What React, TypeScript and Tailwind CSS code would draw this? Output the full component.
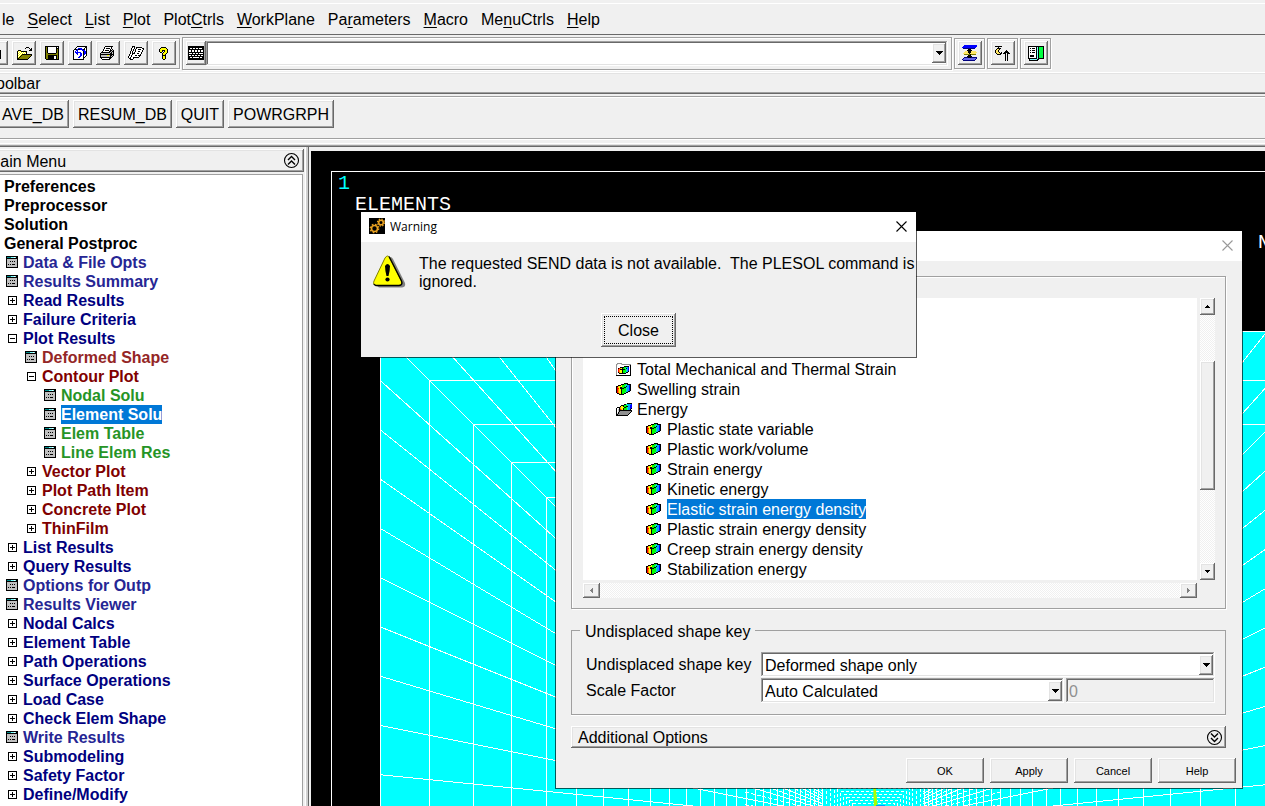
import React from "react";

const RAISED =
  "bg-[#f0f0f0] shadow-[inset_-1px_-1px_0_#696969,inset_1px_1px_0_#fff,inset_-2px_-2px_0_#a0a0a0,inset_2px_2px_0_#e3e3e3]";
const SUNKEN =
  "shadow-[inset_-1px_-1px_0_#fff,inset_1px_1px_0_#a0a0a0,inset_-2px_-2px_0_#e3e3e3,inset_2px_2px_0_#696969]";
const GROOVE = "border border-[#a0a0a0] shadow-[1px_1px_0_#fff,inset_1px_1px_0_#fff]";
const TRACK =
  "bg-[repeating-conic-gradient(#fff_0_25%,#f0f0f0_0_50%)] bg-[length:2px_2px]";

const PALETTE: Record<string, string> = {
  k: "#000000",
  w: "#ffffff",
  y: "#ffff00",
  o: "#808000",
  b: "#0000ff",
  n: "#000080",
  p: "#6464e6",
  g: "#808080",
  l: "#c0c0c0",
  c: "#80ffff",
  t: "#008c8c",
  G: "#00ff40",
  s: "#ffe664",
  r: "#ff0000",
  O: "#ff8c00",
  e: "#00ff00",
  q: "#00e6c8",
  a: "#00a0ff",
  m: "#909090",
};

function Pixels({ rows, className = "" }: { rows: string[]; className?: string }) {
  const width = Math.max(...rows.map((r) => r.length));
  return (
    <svg
      width={width}
      height={rows.length}
      viewBox={`0 0 ${width} ${rows.length}`}
      shapeRendering="crispEdges"
      className={`shrink-0 ${className}`}
      aria-hidden="true"
    >
      {rows.flatMap((row, y) =>
        row
          .split("")
          .map((ch, x) =>
            PALETTE[ch] ? <rect key={`${x}-${y}`} x={x} y={y} width="1" height="1" fill={PALETTE[ch]} /> : null
          )
      )}
    </svg>
  );
}

const NEW_FILE = [
  "kkkkkkkkk...",
  "kwwwwwwkkk..",
  "kwwwwwwkwkk.",
  "kwwwwwwkkkk.",
  "kwwwwwwwwwk.",
  "kwwwwwwwwwk.",
  "kwwwwwwwwwk.",
  "kwwwwwwwwwk.",
  "kwwwwwwwwwk.",
  "kwwwwwwwwwk.",
  "kkkkkkkkkkk.",
];
const OPEN = [
  "..........kkk...",
  ".........k...k.k",
  "..............kk",
  "..kkk........kkk",
  ".kywykkkkkk.....",
  ".kwywywywyk.....",
  ".kywywywywk.....",
  ".kwywykkkkkkkkkk",
  ".kywykoooooooook",
  ".kwykoooooooook.",
  ".kykoooooooook..",
  ".kkoooooooook...",
  ".kkkkkkkkkkk....",
];
const SAVE = [
  "kkkkkkkkkkkkkk",
  "kokwwwwwwwwkwk",
  "kokwwwwwwwwkkk",
  "kokwwwwwwwwkok",
  "kokwwwwwwwwkok",
  "kokwwwwwwwwkok",
  "kokwwwwwwwwkok",
  "kookkkkkkkkook",
  "kooooooooooook",
  "kookkkkkkkkkok",
  "kookkkkkkwwkok",
  "kookkkkkkwwkok",
  "kookkkkkkwwkok",
  ".kkkkkkkkkkkkk",
];
const REPLOT = [
  "....kkkkkkkkkk",
  "...kwwwwwwwwkk",
  "..kwwbbbbwwkwk",
  ".kkkbkkbbbkkwk",
  "kwwbbwwwwbbbwk",
  "kwbwbwwwwwkbbk",
  "kwbbbbbbwwkbbk",
  "kwwbbwwbbwkbbk",
  "kwwwbwwbbwkbwk",
  "kwwwwwwbbwkwwk",
  "kwwwwwbbwwkwk.",
  "kwwwwbbwwwkk..",
  "kwwwwwwwwwk...",
  "kkkkkkkkkkk...",
];
const PRINT = [
  ".....kkkkkkkk...",
  "....kwwwwwwk....",
  "....kwkkkkwk....",
  "...kwwwwwwk.k...",
  "...kwkkkkwkklk..",
  "..kwwwwwwkklkk..",
  ".kkkkkkkkklklk..",
  "klllllllllkklk..",
  "kkkkkkkkkkkkkk..",
  "kllllllyylkklk..",
  "klllllllllklk...",
  "kkkkkkkkkkkk....",
  ".kwwwwwwwkk.....",
  "..kkkkkkkk......",
];
const REPORT = [
  "....kkk.........",
  "....kwk.kkkkkk..",
  "...kwwk.kwwwwwkk",
  "...kwk.kwwkkkwwk",
  "...kwk.kwwwwwwk.",
  "..kwk..kwwkkwwk.",
  "..kwk.kwwwwwwk..",
  "..kwkkkwwkkwwk..",
  ".kwwkwwwwwwwk...",
  ".kwkwwwkkwkkk...",
  "kwwkwwwwwwwk....",
  "kwkwwkkkkkk.....",
  ".kkwwk..........",
  "..kkk...........",
];
const HELP = [
  "..kkkkk...",
  ".kyyyyyk..",
  "kyyyyyyyk.",
  "kyykkkyyk.",
  "kyyk.kyyk.",
  ".kk.kyyyk.",
  "...kyyyk..",
  "...kyyk...",
  "...kkkk...",
  "...kyyk...",
  "...kyyk...",
  "...kyyk...",
  "....kk....",
];
const KEYBOARD = [
  "kkkkkkkkkkkkkkkk",
  "kkkkkkkkkkkkkkkk",
  "kkwwkwwkwwkwwwkk",
  "kkkkkkkkkkkkkkkk",
  "kwwkwwkwwkwwkwwk",
  "kwwkwwkwwkwwkwwk",
  "kkkkkkkkkkkkkkkk",
  "kwwwkwwkwwkwwwwk",
  "kkkkkkkkkkkkkkkk",
  "kwwkwwkwwkwwkwwk",
  "kkkkkkkkkkkkkkkk",
  "kkwwkwwwwwwkwwkk",
  "kkkkkkkkkkkkkkkk",
  "kkkkkkkkkkkkkkkk",
];
const LAYERS = [
  "..bbbbbbbbbbbbb.",
  ".bbbbbbbbbbbbbb.",
  "bbbbbbbbbbbbbb..",
  ".nnnnnnnnnnnn...",
  "......kkk.......",
  ".....kkkkk......",
  "...ssskkksssss..",
  "..sssskkkssssss.",
  ".sssssskssssss..",
  "..ooooookooooo..",
  "......kkk.......",
  ".....kkkkk......",
  "..nnnnkkknnnnnn.",
  ".nppppppppppppn.",
  "nppppppppppppn..",
  ".nnnnnnnnnnnn...",
];
const CONTACT = [
  "kkkkkkk.........",
  "...k............",
  "..kkkk..........",
  ".kssk...........",
  "kssk.......k....",
  "kssk......kkk...",
  "ksssk.k..kkkkk..",
  ".kssskk.kkk.kkk.",
  "..kkkk....k.k...",
  "..........k.k...",
  "..........k.k...",
  "..........k.k...",
  "..........k.k...",
  "..........k.k...",
  "..........k.k...",
];
const PANELS = [
  "kkkkkkkkkkkkkkkk",
  "kwwwwwwwkckGGGGk",
  "kwkwkkkwkckGGGGk",
  "kwwwwwwwkckGGGGk",
  "kwkwkkkwkckGGGGk",
  "kwwwwwwwkckGGGGk",
  "kwkwkkkwkckGGGGk",
  "kwwwwwwwkckGGGGk",
  "kwwwwwwwkckGGGGk",
  "kwkkkkwwkckGGGGk",
  "kwkkkkwwkckGGGGk",
  "kwwwwwwwkckGGGGk",
  "kkkkkkkkkckkkkkk",
  ".kccccccckk.....",
  ".kkkkkkkkk......",
];
const DIALOG_ITEM = [
  "kkkkkkkkkkkk",
  "kttttcccwckk",
  "kkkkkkkkkkkk",
  "kllllllllllk",
  "kllllllllllk",
  "klllklklkllk",
  "kllllllllllk",
  "kllllllllllk",
  "klklklkkkllk",
  "kllllllllllk",
  "kllllllllllk",
  "kkkkkkkkkkkk",
];
const PLUS = [
  "kkkkkkkkk",
  "kwwwwwwwk",
  "kwwwkwwwk",
  "kwwwkwwwk",
  "kwkkkkkwk",
  "kwwwkwwwk",
  "kwwwkwwwk",
  "kwwwwwwwk",
  "kkkkkkkkk",
];
const MINUS = [
  "kkkkkkkkk",
  "kwwwwwwwk",
  "kwwwwwwwk",
  "kwwwwwwwk",
  "kwkkkkkwk",
  "kwwwwwwwk",
  "kwwwwwwwk",
  "kwwwwwwwk",
  "kkkkkkkkk",
];
const CUBE = [
  "........kkkk....",
  ".....kkkeeqkkkk.",
  "..kkkyeeeqqaabk.",
  "kkOyyyeeeqkaabk.",
  "kryykkeekkqaabk.",
  "krrykkkkeeqaabk.",
  "krOyykeeeeqaabk.",
  "krOyykeeeeqaabk.",
  "krOyykeeeeqakk..",
  "krOyykeeeqkk....",
  ".kkOykeekk......",
  "...kkkkk........",
];
const FOLDER = [
  ".mmmmm..........",
  "mlwwwlmmmmmmmmm.",
  "mwwwwwwwwwwwwlk.",
  "mwwwwwwwkkkkkwk.",
  "mwwwkkkkeeqabwk.",
  "mwkrOykeeqkabwk.",
  "mwrOkkkkkeqabwk.",
  "mwrOyykeeeqabwk.",
  "mwrOyykeeeqakwk.",
  "mwkOyykeeqkkwwk.",
  "mwwkkkkkkkwwwwk.",
  "mwwwwwwwwwwwwwk.",
  "kkkkkkkkkkkkkkk.",
];
const FOLDER_OPEN = [
  "...........kkkkk",
  "........kkqqaaab",
  ".....kkkeeeqaabb",
  "....kyykeekkaabb",
  ".kkkOyyykkeqaabb",
  "kwwkOyykeeeqaabk",
  "kwlkrOykeeeqaak.",
  "kwlkkkkkkkkkkkkk",
  "kwlkmmmmmmmmmmmk",
  "kwkmmmmmmmmmmmk.",
  "klkmmmmmmmmmmk..",
  "kkmmmmmmmmmmk...",
  "kkkkkkkkkkkk....",
];
const RESULT_ICONS = { folder: FOLDER, open: FOLDER_OPEN, cube: CUBE };
const DROP = ["kkkkkkk", ".kkkkk.", "..kkk..", "...k..."];
const SMALL_UP = ["..k..", ".kkk.", "kkkkk"];
const SMALL_DOWN = ["kkkkk", ".kkk.", "..k.."];
const SMALL_LEFT = ["..g", ".gg", "ggg", ".gg", "..g"];
const SMALL_RIGHT = ["g..", "gg.", "ggg", "gg.", "g.."];

function Chevrons({ down = false }: { down?: boolean }) {
  return (
    <svg width="17" height="17" viewBox="0 0 17 17" className="shrink-0" fill="none" stroke="#000" aria-hidden="true">
      <circle cx="8.5" cy="8.5" r="7" strokeWidth="1.1" />
      <path
        d={down ? "M5 4.5 L8.5 8 L12 4.5 M5 9 L8.5 12.5 L12 9" : "M5 8 L8.5 4.5 L12 8 M5 12.5 L8.5 9 L12 12.5"}
        strokeWidth="1.4"
      />
    </svg>
  );
}

function Gear({ cx, cy, r }: { cx: number; cy: number; r: number }) {
  return (
    <g stroke="#e8a020" fill="none">
      <circle cx={cx} cy={cy} r={r} strokeWidth="1.6" />
      <circle cx={cx} cy={cy} r={r + 1.2} strokeWidth="1.3" strokeDasharray={`${(r + 1.2) * 0.393} ${(r + 1.2) * 0.393}`} />
    </g>
  );
}

function WarningIcon() {
  return (
    <svg width="33" height="33" viewBox="0 0 33 33" className="shrink-0" aria-hidden="true">
      <path d="M17 2 Q19 2 20 4 L32 28 Q33 32 29 32.500 H6 L4 31 Z" fill="#808080" />
      <path d="M12 3 Q14.500 -1 17 3 L28.500 26 Q30 30 26 30.500 H3 Q-0.500 30 1 26 Z" fill="#ffff00" stroke="#808000" />
      <path d="M16 1.500 L28.500 26 Q30 30 26 30.500 H3 Q1.500 30 1 29" fill="none" stroke="#000" strokeWidth="1.400" />
      <path d="M12 11 Q14.500 7 17 11 Q17 15 15.500 21 H13.500 Q12 15 12 11 Z" />
      <circle cx="14.500" cy="24.500" r="2.100" />
    </svg>
  );
}

const CX = 873;
const CY = 824;
const HALF = 493;
const RINGS = [
  493, 444, 400, 362, 327, 297, 270, 245, 223, 204, 187, 173, 159, 147, 137, 127, 118, 110, 103, 96, 90, 84, 78, 73, 68,
  63, 59, 55, 51, 47, 43, 39, 36, 33, 30, 27, 24, 21, 18, 15, 12,
];

/* One mesh ray from an outer square toward the centre, ending on the inner square. */
function ray(dx: number, dy: number, outer: number, inner: number) {
  const k = inner / outer;
  return `M${CX + dx} ${CY + dy} L${CX + dx * k} ${CY + dy * k}`;
}

function rays(d: number, outer: number, inner: number) {
  return [ray(d, -outer, outer, inner), ray(-outer, d, outer, inner), ray(outer, d, outer, inner)].join(" ");
}

function Mesh() {
  const coarse = Array.from({ length: 21 }, (_, i) => -HALF + (i * HALF) / 10);
  const fine = Array.from({ length: 20 }, (_, i) => -128 + (i + 0.5) * 12.8);
  return (
    <svg className="absolute inset-0 h-full w-full" aria-label="Element plot">
      <g transform="translate(-311 -151)">
        <path d="M331.5 2000 V171.500 H4000" fill="none" stroke="#fff" shapeRendering="crispEdges" />
        <rect x="380" y="331" width="986" height="986" fill="#00ffff" />
        <g fill="none" stroke="#fff" shapeRendering="crispEdges">
          {RINGS.map((r) => (
            <rect
              key={r}
              x={CX - r + 0.5}
              y={CY - r + 0.5}
              width={2 * r}
              height={2 * r}
              strokeDasharray={r < 50 ? "3 2" : undefined}
            />
          ))}
          {coarse.map((d) => (
            <path key={d} d={rays(d, HALF, 50)} />
          ))}
          {fine.map((d) => (
            <path key={d} d={rays(d, 128, 50)} strokeDasharray="4 2" />
          ))}
        </g>
        <path d="M873 780 H875 L878 810 H874 Z" fill="#aaff00" />
        <rect x="876" y="805" width="9" height="2" fill="#00a0ff" />
        <g fontFamily="'Liberation Mono', monospace" fontSize="20">
          <text x="338" y="189" fill="#00ffff">1</text>
          <text x="355" y="210" fill="#fff">ELEMENTS</text>
          <text x="1258" y="248" fill="#fff">N</text>
        </g>
      </g>
    </svg>
  );
}

const MENUS: [string, string, string][] = [
  ["le", "", ""],
  ["", "S", "elect"],
  ["", "L", "ist"],
  ["", "P", "lot"],
  ["Plot", "C", "trls"],
  ["", "W", "orkPlane"],
  ["Pa", "r", "ameters"],
  ["", "M", "acro"],
  ["Me", "n", "uCtrls"],
  ["", "H", "elp"],
];

const TOOLS: [string, string[]][] = [
  ["New", NEW_FILE],
  ["Open", OPEN],
  ["Save", SAVE],
  ["Replot", REPLOT],
  ["Print", PRINT],
  ["Report", REPORT],
  ["Help", HELP],
];

const SIDE_TOOLS: [string, string[]][] = [
  ["Raise hidden", LAYERS],
  ["Reset picking", CONTACT],
  ["Contact manager", PANELS],
];

type Node = { level: number; kind: "root" | "plus" | "minus" | "leaf"; label: string; selected?: boolean };
const n = (level: number, kind: Node["kind"], label: string, selected = false): Node => ({ level, kind, label, selected });
const TREE: Node[] = [
  n(0, "root", "Preferences"),
  n(0, "root", "Preprocessor"),
  n(0, "root", "Solution"),
  n(0, "root", "General Postproc"),
  n(1, "leaf", "Data & File Opts"),
  n(1, "leaf", "Results Summary"),
  n(1, "plus", "Read Results"),
  n(1, "plus", "Failure Criteria"),
  n(1, "minus", "Plot Results"),
  n(2, "leaf", "Deformed Shape"),
  n(2, "minus", "Contour Plot"),
  n(3, "leaf", "Nodal Solu"),
  n(3, "leaf", "Element Solu", true),
  n(3, "leaf", "Elem Table"),
  n(3, "leaf", "Line Elem Res"),
  n(2, "plus", "Vector Plot"),
  n(2, "plus", "Plot Path Item"),
  n(2, "plus", "Concrete Plot"),
  n(2, "plus", "ThinFilm"),
  n(1, "plus", "List Results"),
  n(1, "plus", "Query Results"),
  n(1, "leaf", "Options for Outp"),
  n(1, "leaf", "Results Viewer"),
  n(1, "plus", "Nodal Calcs"),
  n(1, "plus", "Element Table"),
  n(1, "plus", "Path Operations"),
  n(1, "plus", "Surface Operations"),
  n(1, "plus", "Load Case"),
  n(1, "plus", "Check Elem Shape"),
  n(1, "leaf", "Write Results"),
  n(1, "plus", "Submodeling"),
  n(1, "plus", "Safety Factor"),
  n(1, "plus", "Define/Modify"),
];

const INDENT = ["pl-[4px]", "pl-[6px]", "pl-[25px]", "pl-[44px]"];
const BRANCH_COLOR = ["text-black", "text-[#000080]", "text-[#800000]", "text-[#008000]"];
const LEAF_COLOR = ["text-black", "text-[#262694]", "text-[#942626]", "text-[#269426]"];

function TreeRow({ node }: { node: Node }) {
  const color = node.selected
    ? "bg-[#0078d7] text-white"
    : node.kind === "leaf"
      ? LEAF_COLOR[node.level]
      : BRANCH_COLOR[node.level];
  return (
    <li className={`flex h-[19px] shrink-0 items-center ${INDENT[node.level]}`}>
      {node.kind !== "root" && (
        <span className="flex w-[17px] shrink-0">
          {node.kind === "leaf" && <Pixels rows={DIALOG_ITEM} className="mb-px" />}
          {node.kind === "plus" && <Pixels rows={PLUS} className="ml-[2px]" />}
          {node.kind === "minus" && <Pixels rows={MINUS} className="ml-[2px]" />}
        </span>
      )}
      <a href="#" className={`leading-[19px] font-bold whitespace-nowrap ${color}`}>
        {node.label}
      </a>
    </li>
  );
}

const RESULTS: { icon: "folder" | "cube" | "open"; child?: boolean; label: string; selected?: boolean }[] = [
  { icon: "folder", label: "Total Mechanical and Thermal Strain" },
  { icon: "cube", label: "Swelling strain" },
  { icon: "open", label: "Energy" },
  { icon: "cube", child: true, label: "Plastic state variable" },
  { icon: "cube", child: true, label: "Plastic work/volume" },
  { icon: "cube", child: true, label: "Strain energy" },
  { icon: "cube", child: true, label: "Kinetic energy" },
  { icon: "cube", child: true, label: "Elastic strain energy density", selected: true },
  { icon: "cube", child: true, label: "Plastic strain energy density" },
  { icon: "cube", child: true, label: "Creep strain energy density" },
  { icon: "cube", child: true, label: "Stabilization energy" },
];

function CloseCross() {
  return (
    <svg width="11" height="11" viewBox="0 0 11 11" className="block" aria-hidden="true">
      <path d="M0.500 0.500 L10.500 10.500 M10.500 0.500 L0.500 10.500" stroke="currentColor" fill="none" strokeWidth="1.1" />
    </svg>
  );
}

function Dropdown({ id, value, className }: { id: string; value: string; className: string }) {
  return (
    <div className={`relative flex h-[25px] bg-white ${SUNKEN} ${className}`}>
      <select
        id={id}
        className="w-full appearance-none bg-transparent pt-[2px] pr-5 pl-[4px] outline-none"
        defaultValue={value}
      >
        <option>{value}</option>
      </select>
      <span
        className={`pointer-events-none absolute top-[3px] right-[2px] flex h-[20px] w-[14px] items-center justify-center ${RAISED}`}
      >
        <Pixels rows={DROP} />
      </span>
    </div>
  );
}

function ContourDialog() {
  return (
    <section
      aria-label="Contour Element Solution Data"
      className="absolute top-[230px] left-[555px] w-[688px] border border-black/65 bg-[#f0f0f0] bg-clip-padding"
    >
      <header className="flex h-[30px] items-center justify-end bg-white pr-[9px] pb-[2px]">
        <button aria-label="Close dialog" className="text-[#999]">
          <CloseCross />
        </button>
      </header>
      <div className="pt-[15px] pr-[16px] pl-[15px]">
        <div className={`flex gap-[3px] pt-[21px] pr-[10px] pb-[10px] pl-[11px] ${GROOVE}`}>
          <div className="flex flex-1 flex-col gap-[3px]">
            <ul className="h-[282px] bg-white pt-[61px]">
              {RESULTS.map((r) => (
                <li key={r.label} className={`flex h-[20px] items-center gap-[5px] ${r.child ? "pl-[63px]" : "pl-[33px]"}`}>
                  <Pixels rows={RESULT_ICONS[r.icon]} />
                  <a
                    href="#"
                    className={`h-[20px] pt-[2px] leading-[18px] ${r.selected ? "bg-[#0078d7] text-white" : "text-black"}`}
                  >
                    {r.label}
                  </a>
                </li>
              ))}
            </ul>
            <div className={`flex h-[15px] justify-between ${TRACK}`}>
              <button aria-label="Scroll left" className={`flex w-[17px] items-center justify-center ${RAISED}`}>
                <Pixels rows={SMALL_LEFT} />
              </button>
              <button aria-label="Scroll right" className={`flex w-[17px] items-center justify-center ${RAISED}`}>
                <Pixels rows={SMALL_RIGHT} />
              </button>
            </div>
          </div>
          <div className={`flex h-[282px] w-[15px] flex-col ${TRACK}`}>
            <button aria-label="Scroll up" className={`flex h-[17px] items-center justify-center ${RAISED}`}>
              <Pixels rows={SMALL_UP} />
            </button>
            <div className={`mt-[46px] h-[129px] ${RAISED}`} />
            <button aria-label="Scroll down" className={`mt-auto flex h-[17px] items-center justify-center ${RAISED}`}>
              <Pixels rows={SMALL_DOWN} />
            </button>
          </div>
        </div>

        <fieldset className="mt-[10px] flex flex-col gap-px border border-[#a0a0a0] pt-[11px] pr-[10px] pb-[11px] pl-[14px] shadow-[0_1px_0_#fff]">
          <legend className="-ml-[6px] bg-[#f0f0f0] px-[5px] pt-[4px] leading-[18px]">Undisplaced shape key</legend>
          <div className="flex items-center">
            <label htmlFor="shape-key" className="w-[175px] shrink-0">
              Undisplaced shape key
            </label>
            <Dropdown id="shape-key" value="Deformed shape only" className="flex-1" />
          </div>
          <div className="flex items-center">
            <label htmlFor="scale-factor" className="w-[175px] shrink-0">
              Scale Factor
            </label>
            <Dropdown id="scale-factor" value="Auto Calculated" className="mr-[2px] flex-1" />
            <input
              aria-label="Scale factor value"
              className={`h-[25px] w-[149px] bg-[#f0f0f0] px-[3px] pt-[2px] text-[#909090] outline-none ${SUNKEN}`}
              defaultValue="0"
              readOnly
            />
          </div>
        </fieldset>

        <button className={`mt-[11px] flex h-[22px] w-full items-center justify-between pr-[3px] pl-[7px] ${RAISED}`}>
          <span className="pt-[2px]">Additional Options</span>
          <Chevrons down />
        </button>
      </div>
      <footer className="mt-[10px] flex justify-end gap-[6px] pr-[6px] pb-[5px] text-[11px]">
        {["OK", "Apply", "Cancel", "Help"].map((b) => (
          <button key={b} className={`h-[25px] w-[78px] ${RAISED}`}>
            {b}
          </button>
        ))}
      </footer>
    </section>
  );
}

function WarningDialog() {
  return (
    <section
      role="alertdialog"
      aria-label="Warning"
      className="absolute top-[211px] left-[360px] w-[557px] border border-black/65 bg-[#f0f0f0] bg-clip-padding"
    >
      <header className="flex h-[30px] items-center bg-white pr-[9px] pl-[8px] pb-[2px]">
        <svg width="16" height="16" viewBox="0 0 16 16" aria-hidden="true">
          <rect width="16" height="16" fill="#000" />
          <Gear cx={5.5} cy={10.5} r={3} />
          <Gear cx={12} cy={4.5} r={2.3} />
        </svg>
        <h2 className="ml-[5px] flex-1 pt-[2px] font-['Open_Sans',sans-serif] text-[12px]">Warning</h2>
        <button aria-label="Close warning">
          <CloseCross />
        </button>
      </header>
      <div className="flex pt-[13px] pl-[12px]">
        <div className="w-[46px] shrink-0">
          <WarningIcon />
        </div>
        <p className="leading-[18px] whitespace-pre">
          {"The requested SEND data is not available.  The PLESOL command is\nignored."}
        </p>
      </div>
      <div className="flex justify-center pt-[22px] pb-[10px]">
        <button className={`flex h-[34px] w-[75px] p-[3px] ${RAISED}`}>
          <span className="flex flex-1 items-center justify-center self-stretch border border-dotted border-black pt-[2px]">
            Close
          </span>
        </button>
      </div>
    </section>
  );
}

export default function App() {
  return (
    <div className="relative flex h-screen flex-col overflow-hidden bg-[#f0f0f0] font-['Liberation_Sans',Arial,sans-serif] text-[16px] leading-[18px] text-black">
      <nav className="mt-[3px] flex h-[32px] shrink-0 items-center gap-[13px] border-t border-b border-t-white border-b-[#696969] pt-[2px] pl-[2px]">
        {MENUS.map(([before, key, after], i) => (
          <a key={i} href="#">
            {before}
            <span className="underline underline-offset-2">{key}</span>
            {after}
          </a>
        ))}
      </nav>

      <div className="flex h-[37px] shrink-0 items-center gap-[2px] pb-px">
        <div className={`-ml-[20px] flex h-[31px] items-center gap-[4px] px-[3px] ${GROOVE}`}>
          {TOOLS.map(([label, rows]) => (
            <button key={label} aria-label={label} className={`flex h-[24px] w-[24px] items-center justify-center ${RAISED}`}>
              <Pixels rows={rows} />
            </button>
          ))}
        </div>
        <div className={`flex h-[33px] w-[770px] items-center px-[3px] ${GROOVE}`}>
          <button aria-label="Command window" className={`flex h-[24px] w-[20px] shrink-0 items-center justify-center ${RAISED}`}>
            <Pixels rows={KEYBOARD} />
          </button>
          <div className={`flex h-[25px] flex-1 items-center bg-white pr-[2px] ${SUNKEN}`}>
            <input aria-label="Command" className="h-full min-w-0 flex-1 bg-transparent px-1 outline-none" />
            <button aria-label="Command history" className={`flex h-[20px] w-[14px] items-center justify-center ${RAISED}`}>
              <Pixels rows={DROP} />
            </button>
          </div>
        </div>
        {SIDE_TOOLS.map(([label, rows]) => (
          <div key={label} className={`flex h-[31px] w-[31px] items-center justify-center ${GROOVE}`}>
            <button aria-label={label} className={`flex h-[24px] w-[24px] items-center justify-center ${RAISED}`}>
              <Pixels rows={rows} />
            </button>
          </div>
        ))}
      </div>

      <h2 className={`-mx-[12px] flex h-[22px] shrink-0 items-center pt-[2px] ${RAISED}`}>Toolbar</h2>

      <div className="-mx-[4px] mt-[2px] flex h-[43px] shrink-0 items-start gap-[4px] border border-[#a0a0a0] pt-[3px] shadow-[1px_1px_0_#fff,inset_1px_1px_0_#fff]">
        {["AVE_DB", "RESUM_DB", "QUIT", "POWRGRPH"].map((b) => (
          <button key={b} className={`h-[28px] px-[5px] pt-[2px] ${RAISED}`}>
            {b}
          </button>
        ))}
      </div>

      <div className={`-mx-[4px] mt-[4px] h-[4px] shrink-0 ${RAISED}`} />

      <main className="flex min-h-0 flex-1">
        <aside className="flex w-[304px] shrink-0 flex-col gap-[2px] pt-[2px]">
          <header className={`-ml-[14px] flex h-[23px] shrink-0 items-center justify-between pr-[4px] pl-px ${RAISED}`}>
            <h2 className="pt-[2px]">Main Menu</h2>
            <button aria-label="Collapse main menu">
              <Chevrons />
            </button>
          </header>
          <ul className="mr-px flex min-h-0 flex-1 flex-col overflow-hidden border-t border-r border-[#a0a0a0] bg-white pt-[2px]">
            {TREE.map((node) => (
              <TreeRow key={node.label} node={node} />
            ))}
          </ul>
        </aside>
        <div className="ml-px w-[4px] shrink-0 border-r border-l border-r-[#696969] border-l-white bg-[#d0d0d0]" />
        <section aria-label="Graphics" className="relative mt-[4px] ml-[2px] flex-1 overflow-hidden bg-black">
          <Mesh />
        </section>
      </main>

      <ContourDialog />
      <WarningDialog />
    </div>
  );
}
